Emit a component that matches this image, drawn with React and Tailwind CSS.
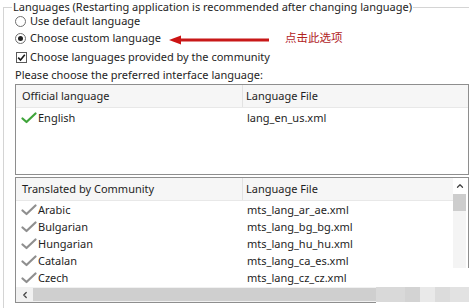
import { ChevronLeft, ChevronUp } from "lucide-react";

const Check = ({ color }) => (
  <svg width="16" height="12" viewBox="0 0 16 12" className="shrink-0">
    <path
      d="M1.5 6.5 L5.5 10 L14.5 1.5"
      fill="none"
      stroke={color}
      strokeWidth="2.2"
      strokeLinecap="round"
      strokeLinejoin="round"
    />
  </svg>
);

const community = [
  ["Arabic", "mts_lang_ar_ae.xml"],
  ["Bulgarian", "mts_lang_bg_bg.xml"],
  ["Hungarian", "mts_lang_hu_hu.xml"],
  ["Catalan", "mts_lang_ca_es.xml"],
  ["Czech", "mts_lang_cz_cz.xml"],
];

const Header = ({ first }) => (
  <div className="flex h-[23px] items-center bg-[#f6f6f6] border-b border-[#e8e8e8]">
    <div className="w-[227px] h-full flex items-center pl-[6px] border-r border-[#e2e2e2]">
      {first}
    </div>
    <div className="pl-[3px]">Language File</div>
  </div>
);

const Row = ({ name, file, color }) => (
  <div className="flex h-[17px] items-center">
    <div className="w-[228px] flex items-center pl-[5px] gap-[1px]">
      <Check color={color} />
      <span>{name}</span>
    </div>
    <div className="pl-[3px]">{file}</div>
  </div>
);

export default function App() {
  return (
    <div
      className="relative w-[469px] h-[308px] overflow-hidden bg-white text-[#1e1e1e] text-[11px] leading-[14px]"
      style={{ fontFamily: '"Noto Sans", "Noto Sans CJK SC", sans-serif' }}
    >
      <fieldset className="ml-[3px] border-t border-l border-[#d4d4d4] w-[480px] h-[320px]">
        <legend className="ml-[8px] px-[1px] h-[14px] leading-[14px] whitespace-nowrap">
          Languages (Restarting application is recommended after changing language)
        </legend>

        <div className="flex flex-col pl-[11px]">
          <div className="flex items-center h-[14px] gap-[4px]">
            <span className="w-[11px] h-[11px] rounded-full border border-[#6f6f6f] bg-white" />
            <span>Use default language</span>
          </div>

          <div className="flex items-center h-[14px] mt-[3px] gap-[4px]">
            <span className="w-[11px] h-[11px] rounded-full border border-[#6f6f6f] bg-white flex items-center justify-center">
              <span className="w-[5px] h-[5px] rounded-full bg-[#222]" />
            </span>
            <span>Choose custom language</span>
            <div className="flex items-center ml-[4px] mt-[4px]">
              <svg width="100" height="10" viewBox="0 0 100 10">
                <polygon points="0,5 12,0.5 12,9.5" fill="#cc1414" />
                <rect x="10" y="3.5" width="90" height="3" fill="#c81818" />
              </svg>
            </div>
            <span className="ml-[12px] text-[11.5px] text-[#b1231f]">点击此选项</span>
          </div>

          <div className="flex items-center h-[14px] mt-[5px] gap-[3px]">
            <span className="ml-[1px] w-[11px] h-[11px] border border-[#5a5a5a] bg-white flex items-center justify-center">
              <svg width="9" height="9" viewBox="0 0 9 9">
                <path d="M1.2 4.6 L3.5 7 L7.8 1.8" fill="none" stroke="#1a1a1a" strokeWidth="1.6" />
              </svg>
            </span>
            <span>Choose languages provided by the community</span>
          </div>

          <div className="h-[14px] mt-[4px] flex items-center">
            Please choose the preferred interface language:
          </div>

          <div className="mt-[2px] w-[454px] h-[91px] border border-[#8e8e8e] bg-white">
            <Header first="Official language" />
            <div className="pt-[1px]">
              <Row name="English" file="lang_en_us.xml" color="#3fa43a" />
            </div>
          </div>

          <div className="mt-[2px] w-[454px] h-[126px] border border-[#8e8e8e] bg-white flex flex-col">
            <div className="flex flex-1">
              <div className="flex-1">
                <Header first="Translated by Community" />
                {community.map(([n, f]) => (
                  <Row key={n} name={n} file={f} color="#8f8f8f" />
                ))}
              </div>
              <div className="w-[13px] mr-[2px] flex flex-col bg-[#f4f4f4]">
                <div className="h-[16px] flex items-center justify-center bg-white">
                  <ChevronUp size={10} strokeWidth={3} color="#444" />
                </div>
                <div className="h-[17px] bg-[#cdcdcd]" />
              </div>
            </div>
            <div className="h-[15px] flex items-center bg-[#f1f1f1]">
              <div className="w-[17px] flex items-center justify-center">
                <ChevronLeft size={10} strokeWidth={3} color="#444" />
              </div>
              <div className="h-[13px] w-[400px] bg-[#cfcfcf]" />
            </div>
          </div>
        </div>
      </fieldset>

      <div className="absolute left-[372px] top-[268px] w-[97px] h-[19px] bg-white rounded-l-[6px]" />
      <div className="absolute left-[376px] top-[287px] flex h-[15px]">
        <div className="w-[29px] bg-[#d9d9d9]" />
        <div className="w-[15px] bg-[#d3d3d3]" />
        <div className="w-[15px] bg-[#e9e9e9]" />
        <div className="w-[15px] bg-[#dcdcdc]" />
        <div className="w-[19px] bg-[#e2e2e2]" />
      </div>
      <div className="absolute left-[376px] top-[302px] w-[93px] h-[6px] bg-white" />
    </div>
  );
}
